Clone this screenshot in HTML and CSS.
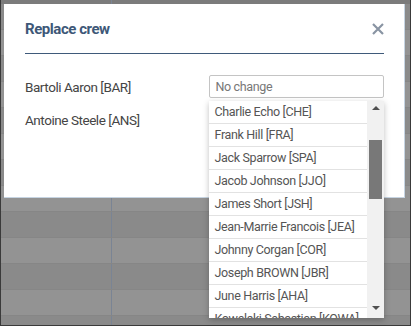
FILE: index.html
```html
<!DOCTYPE html>
<html lang="en">

<head>
    <meta charset="UTF-8">
    <title>Replace crew</title>
    <link rel="stylesheet" href="styles.css">
</head>

<body>
    <div class="page">
        <div class="grid">
            <div class="grid-row top"><div class="grid-cell"></div></div>
            <div class="grid-row"><div class="grid-cell"></div></div>
            <div class="grid-row"><div class="grid-cell"></div></div>
            <div class="grid-row"><div class="grid-cell"></div></div>
            <div class="grid-row"><div class="grid-cell"></div></div>
            <div class="grid-row"><div class="grid-cell"></div></div>
            <div class="grid-row"><div class="grid-cell"></div></div>
            <div class="grid-row"><div class="grid-cell"></div></div>
            <div class="grid-row"><div class="grid-cell"></div></div>
            <div class="grid-row"><div class="grid-cell"></div></div>
            <div class="grid-row"><div class="grid-cell"></div></div>
            <div class="grid-row"><div class="grid-cell"></div></div>
            <div class="grid-row"><div class="grid-cell"></div></div>
            <div class="grid-row"><div class="grid-cell"></div></div>
        </div>

        <div class="modal">
            <div class="modal-header">
                <h2>Replace crew</h2>
                <span class="close">
                    <svg width="12" height="12" viewBox="0 0 12 12">
                        <path d="M1 1 L11 11 M11 1 L1 11" stroke="#8994a3" stroke-width="2.2" fill="none" />
                    </svg>
                </span>
            </div>

            <div class="crew-row">
                <span class="crew-name">Bartoli Aaron [BAR]</span>
                <div class="picker">
                    <input type="text" placeholder="No change">
                    <div class="dropdown">
                        <ul class="options">
                            <li>Charlie Echo [CHE]</li>
                            <li>Frank Hill [FRA]</li>
                            <li>Jack Sparrow [SPA]</li>
                            <li>Jacob Johnson [JJO]</li>
                            <li>James Short [JSH]</li>
                            <li>Jean-Marrie Francois [JEA]</li>
                            <li>Johnny Corgan [COR]</li>
                            <li>Joseph BROWN [JBR]</li>
                            <li>June Harris [AHA]</li>
                            <li>Kowalski Sebastian [KOWA]</li>
                        </ul>
                        <div class="scrollbar">
                            <span class="arrow up"></span>
                            <span class="thumb"></span>
                            <span class="arrow down"></span>
                        </div>
                    </div>
                </div>
            </div>

            <div class="crew-row">
                <span class="crew-name">Antoine Steele [ANS]</span>
            </div>
        </div>
    </div>
</body>

</html>
```

FILE: styles.css
```css
body {
    margin: 0;
    font-family: Roboto, "Liberation Sans", sans-serif;
}

.page {
    position: relative;
    width: 411px;
    height: 326px;
    overflow: hidden;
    background-color: #8a8a8a;
}

.page::after {
    content: "";
    position: absolute;
    left: 0;
    top: 0;
    right: 0;
    bottom: 0;
    border: 1px solid #3a3a3a;
    border-top: none;
    pointer-events: none;
}

/* table behind the overlay */
.grid-row {
    height: 26px;
    box-sizing: border-box;
    border-bottom: 1px solid #868686;
    background-color: #939393;
}

.grid-row:nth-child(even) {
    background-color: #8a8a8a;
}

.grid-row.top {
    height: 4px;
    border: none;
    background-color: #7b7b7b;
}

.grid-cell {
    width: 112px;
    height: 100%;
    box-sizing: border-box;
    border-right: 1px solid #7a8494;
}

/* modal */
.modal {
    position: absolute;
    left: 4px;
    top: 4px;
    width: 401px;
    height: 194px;
    box-sizing: border-box;
    padding: 0 20px 0 21px;
    background-color: #fff;
    border: 1px solid #c6d4e2;
    border-top: none;
    border-left: none;
}

.modal-header {
    display: flex;
    align-items: center;
    justify-content: space-between;
    padding: 15px 0 14px;
    border-bottom: 1px solid #3f5a7a;
}

.modal-header h2 {
    margin: 0;
    font-size: 15px;
    line-height: 20px;
    font-weight: bold;
    letter-spacing: -0.45px;
    color: #3e5878;
}

.close {
    display: flex;
    margin-right: 0;
    cursor: pointer;
}

.crew-row {
    display: flex;
    align-items: center;
    height: 23px;
    margin-top: 21px;
}

.crew-row + .crew-row {
    margin-top: 10px;
}

.crew-name {
    width: 185px;
    font-size: 13.5px;
    letter-spacing: -0.45px;
    color: #454545;
}

.picker {
    position: relative;
    width: 175px;
    height: 23px;
}

.picker input {
    width: 100%;
    height: 23px;
    box-sizing: border-box;
    margin: 0;
    padding: 0 5px;
    border: 1px solid #c4c4c4;
    border-radius: 2px;
    font-family: inherit;
    font-size: 12.5px;
    letter-spacing: -0.35px;
    color: #444;
    outline: none;
}

.picker input::placeholder {
    color: #777;
}

/* open list */
.dropdown {
    position: absolute;
    left: 0;
    top: 26px;
    z-index: 2;
    display: flex;
    width: 175px;
    height: 217px;
    background-color: #fff;
    box-shadow: 0 2px 6px rgba(0, 0, 0, 0.25);
}

.options {
    flex: 1;
    margin: 0;
    padding: 0;
    list-style: none;
    overflow: hidden;
}

.options li {
    height: 22px;
    line-height: 22px;
    padding-left: 5px;
    border-bottom: 1px solid #e2e2e2;
    font-size: 12.5px;
    letter-spacing: -0.35px;
    color: #555;
    white-space: nowrap;
}

.scrollbar {
    display: flex;
    flex-direction: column;
    align-items: center;
    width: 17px;
    background-color: #f1f1f1;
}

.arrow {
    width: 0;
    height: 0;
    border-left: 4px solid transparent;
    border-right: 4px solid transparent;
}

.arrow.up {
    margin-top: 5px;
    border-bottom: 4px solid #505050;
}

.arrow.down {
    margin-top: auto;
    margin-bottom: 8px;
    border-top: 4px solid #505050;
}

.thumb {
    width: 13px;
    height: 59px;
    margin-top: 30px;
    background-color: #787878;
}
```
